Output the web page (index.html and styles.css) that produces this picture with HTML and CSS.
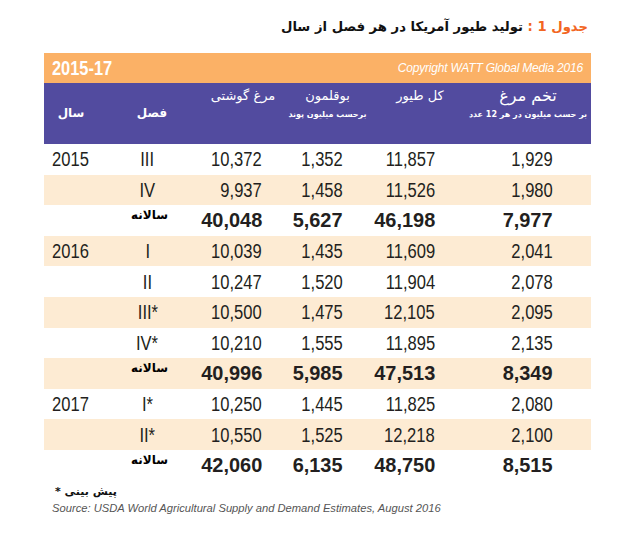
FILE: index.html
```html
<!DOCTYPE html>
<html lang="fa">
<head>
<meta charset="utf-8">
<title>جدول 1</title>
<link rel="stylesheet" href="styles.css">
</head>
<body>
<div class="page">
  <h1 class="title" dir="rtl"><span class="lbl">جدول 1 :</span> تولید طیور آمریکا در هر فصل از سال</h1>
  <div class="table">
    <div class="band">
      <span class="range">2015-17</span>
      <span class="copy">Copyright WATT Global Media 2016</span>
    </div>
    <div class="head">
      <div class="hc"><span class="low">سال</span></div>
      <div class="hc"><span class="low">فصل</span></div>
      <div class="hc"><span class="top">مرغ گوشتی</span></div>
      <div class="hc"><span class="top">بوقلمون</span><span class="sub">برحسب میلیون پوند</span></div>
      <div class="hc"><span class="top">کل طیور</span></div>
      <div class="hc egg"><span class="top big">تخم مرغ</span><span class="sub">بر حسب میلیون در هر 12 عدد</span></div>
    </div>
    <div class="row"><span class="c yr"><i>2015</i></span><span class="c q"><i>III</i></span><span class="c n"><i>10,372</i></span><span class="c n"><i>1,352</i></span><span class="c n"><i>11,857</i></span><span class="c n"><i>1,929</i></span></div>
    <div class="row alt"><span class="c yr"></span><span class="c q"><i>IV</i></span><span class="c n"><i>9,937</i></span><span class="c n"><i>1,458</i></span><span class="c n"><i>11,526</i></span><span class="c n"><i>1,980</i></span></div>
    <div class="row tot"><span class="c yr"></span><span class="ann">سالانه</span><span class="c n"><i>40,048</i></span><span class="c n"><i>5,627</i></span><span class="c n"><i>46,198</i></span><span class="c n"><i>7,977</i></span></div>
    <div class="row alt"><span class="c yr"><i>2016</i></span><span class="c q"><i>I</i></span><span class="c n"><i>10,039</i></span><span class="c n"><i>1,435</i></span><span class="c n"><i>11,609</i></span><span class="c n"><i>2,041</i></span></div>
    <div class="row"><span class="c yr"></span><span class="c q"><i>II</i></span><span class="c n"><i>10,247</i></span><span class="c n"><i>1,520</i></span><span class="c n"><i>11,904</i></span><span class="c n"><i>2,078</i></span></div>
    <div class="row alt"><span class="c yr"></span><span class="c q"><i>III*</i></span><span class="c n"><i>10,500</i></span><span class="c n"><i>1,475</i></span><span class="c n"><i>12,105</i></span><span class="c n"><i>2,095</i></span></div>
    <div class="row"><span class="c yr"></span><span class="c q"><i>IV*</i></span><span class="c n"><i>10,210</i></span><span class="c n"><i>1,555</i></span><span class="c n"><i>11,895</i></span><span class="c n"><i>2,135</i></span></div>
    <div class="row alt tot"><span class="c yr"></span><span class="ann">سالانه</span><span class="c n"><i>40,996</i></span><span class="c n"><i>5,985</i></span><span class="c n"><i>47,513</i></span><span class="c n"><i>8,349</i></span></div>
    <div class="row"><span class="c yr"><i>2017</i></span><span class="c q"><i>I*</i></span><span class="c n"><i>10,250</i></span><span class="c n"><i>1,445</i></span><span class="c n"><i>11,825</i></span><span class="c n"><i>2,080</i></span></div>
    <div class="row alt"><span class="c yr"></span><span class="c q"><i>II*</i></span><span class="c n"><i>10,550</i></span><span class="c n"><i>1,525</i></span><span class="c n"><i>12,218</i></span><span class="c n"><i>2,100</i></span></div>
    <div class="row tot"><span class="c yr"></span><span class="ann">سالانه</span><span class="c n"><i>42,060</i></span><span class="c n"><i>6,135</i></span><span class="c n"><i>48,750</i></span><span class="c n"><i>8,515</i></span></div>
  </div>
  <div class="note" dir="rtl">پیش بینی *</div>
  <div class="source">Source: USDA World Agricultural Supply and Demand Estimates, August 2016</div>
</div>
</body>
</html>
```
FILE: styles.css
```css
html, body {
  margin: 0;
  padding: 0;
  background: #ffffff;
}
.page {
  width: 628px;
  height: 538px;
  padding-top: 17px;
  box-sizing: border-box;
  font-family: "Liberation Sans", Arial, sans-serif;
  color: #231f20;
}
.title {
  margin: 0 40px 16px 0;
  font-family: "DejaVu Sans", sans-serif;
  font-size: 13.2px;
  line-height: 20px;
  font-weight: bold;
  color: #111;
  text-align: right;
}
.title .lbl {
  color: #f26522;
}
.table {
  margin-left: 44px;
  width: 547px;
}
.band {
  height: 30px;
  background: #fbb166;
  display: flex;
  align-items: center;
  justify-content: space-between;
  padding: 0 8px;
  color: #fff;
}
.range {
  display: inline-block;
  font-size: 20px;
  font-weight: bold;
  transform: scaleX(0.82);
  transform-origin: left center;
}
.copy {
  font-style: italic;
  font-size: 12px;
  letter-spacing: -0.2px;
}
.head {
  height: 61px;
  background: #524b9f;
  display: grid;
  grid-template-columns: 54px 108px 74px 95px 90px 126px;
  color: #fff;
  font-family: "DejaVu Sans", sans-serif;
}
.hc {
  display: flex;
  flex-direction: column;
  align-items: center;
  padding-top: 4px;
  white-space: nowrap;
}
.hc .top {
  font-size: 13px;
  line-height: 18px;
}
.hc .big {
  font-size: 16px;
  line-height: 18px;
}
.hc .sub {
  font-size: 8px;
  line-height: 14px;
  font-weight: bold;
  margin-top: 3px;
}
.hc .low {
  font-size: 12px;
  font-weight: bold;
  line-height: 18px;
  margin-top: 17px;
}
.row {
  height: 30.6px;
  display: grid;
  grid-template-columns: 76px 55px 87px 81px 92px 118px 38px;
  align-items: center;
  font-size: 19.5px;
  line-height: 22px;
}
.row.alt {
  background: #fdebd3;
}
.c i {
  display: inline-block;
  font-style: normal;
  transform: scaleX(0.85);
}
.yr {
  padding-left: 8px;
}
.yr i {
  transform-origin: left center;
}
.q {
  text-align: center;
}
.n {
  text-align: right;
}
.n i {
  transform-origin: right center;
}
.tot .n {
  font-weight: bold;
  font-size: 21px;
}
.tot .n i {
  transform: scaleX(0.95);
}
.ann {
  align-self: start;
  padding-top: 3px;
  text-align: right;
  padding-right: 7px;
  font-family: "DejaVu Sans", sans-serif;
  font-weight: bold;
  font-size: 12px;
  line-height: 14px;
  color: #000;
}
.note {
  margin: 3px 0 0 55px;
  display: inline-block;
  font-family: "DejaVu Sans", sans-serif;
  font-weight: bold;
  font-size: 11px;
  line-height: 16px;
  color: #111;
}
.source {
  margin: 0 0 0 52px;
  font-style: italic;
  font-size: 11.2px;
  line-height: 16px;
  color: #555;
}
```
